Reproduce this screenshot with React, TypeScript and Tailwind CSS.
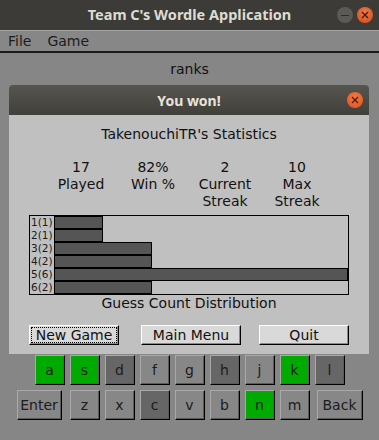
import React from 'react'

const green = 'bg-[#00aa00]'
const dark = 'bg-[#666666]'
const plain = 'bg-[#878787]'

const row1: [string, string][] = [
  ['a', green], ['s', green], ['d', dark], ['f', plain], ['g', plain],
  ['h', dark], ['j', plain], ['k', green], ['l', dark],
]
const row2: [string, string][] = [
  ['z', plain], ['x', plain], ['c', dark], ['v', plain], ['b', plain], ['n', green], ['m', plain],
]

const stats = [
  ['17', 'Played', ''],
  ['82%', 'Win %', ''],
  ['2', 'Current', 'Streak'],
  ['10', 'Max', 'Streak'],
]

const dist = [1, 1, 2, 2, 6, 2]

function Key({ label, bg, w = 'w-[30px]' }: { label: string; bg: string; w?: string }) {
  return (
    <div
      className={`${w} h-[30px] ${bg} flex items-center justify-center border border-t-[#a9a9a9] border-l-[#a9a9a9] border-r-black border-b-black shadow-[inset_-1px_-1px_0_#5a5a5a] text-[14px] text-[#1c1c1c]`}
    >
      {label}
    </div>
  )
}

function TkButton({ label, w, focus }: { label: string; w: string; focus?: boolean }) {
  return (
    <div
      className={`${w} h-[20px] bg-[#d9d9d9] border border-t-white border-l-white border-r-black border-b-black shadow-[inset_-1px_-1px_0_#8a8a8a] flex items-center justify-center p-[1px]`}
    >
      <div
        className={`w-full h-full flex items-center justify-center text-[14px] leading-none text-[#111] ${focus ? 'outline outline-1 outline-dotted outline-black -outline-offset-1' : ''}`}
      >
        {label}
      </div>
    </div>
  )
}

export default function App() {
  return (
    <div
      className="relative w-[379px] h-[440px] bg-[#868686] flex flex-col overflow-hidden"
      style={{ fontFamily: '"DejaVu Sans", sans-serif' }}
    >
      {/* window title bar */}
      <div className="h-[30px] bg-[#3c3b37] flex items-center justify-center relative">
        <span className="text-[14.5px] font-bold text-[#dfdbd2]" style={{ fontFamily: '"Noto Sans", sans-serif' }}>
          Team C's Wordle Application
        </span>
        <div className="absolute right-[6px] top-[7px] flex gap-[4px]">
          <div className="w-[16px] h-[16px] rounded-full bg-[#5b5a56] flex items-center justify-center">
            <div className="w-[8px] h-[1px] bg-[#2e2d2a]" />
          </div>
          <div className="w-[16px] h-[16px] rounded-full bg-[radial-gradient(circle_at_50%_35%,#f07a45,#d4481a)] flex items-center justify-center">
            <svg width="8" height="8" viewBox="0 0 8 8">
              <path d="M1 1L7 7M7 1L1 7" stroke="#3a1c0c" strokeWidth="1.3" />
            </svg>
          </div>
        </div>
      </div>

      {/* menu bar */}
      <div className="h-[23px] bg-[#878787] border-t border-t-[#a3a3a3] border-b-2 border-b-[#1a1a1a] flex items-center gap-[16px] px-[8px] text-[14px] text-[#1c1c1c]">
        <span>File</span>
        <span>Game</span>
      </div>

      {/* main content */}
      <div className="flex-1 flex flex-col items-center pt-[8px] pb-[20px]">
        <div className="text-[14px] leading-[17px] text-[#111]">ranks</div>
        <div className="flex-1" />
        <div className="flex flex-col items-center gap-[5px] w-full">
          <div className="flex gap-[5px]">
            {row1.map(([l, bg]) => (
              <Key key={l} label={l} bg={bg} />
            ))}
          </div>
          <div className="flex">
            <Key label="Enter" bg={plain} w="w-[45px]" />
            <div className="flex gap-[5px] ml-[8px] mr-[7px]">
              {row2.map(([l, bg]) => (
                <Key key={l} label={l} bg={bg} />
              ))}
            </div>
            <Key label="Back" bg={plain} w="w-[46px]" />
          </div>
        </div>
      </div>

      {/* dialog window */}
      <div className="absolute left-[9px] top-[85px] w-[360px]">
        <div className="h-[30px] rounded-t-[4px] bg-gradient-to-b from-[#57554f] to-[#403f3a] flex items-center justify-center relative">
          <span className="text-[14px] font-bold text-[#e8e4dc]" style={{ fontFamily: '"Noto Sans", sans-serif' }}>
            You won!
          </span>
          <div className="absolute right-[6px] top-[7px] w-[16px] h-[16px] rounded-full bg-[radial-gradient(circle_at_50%_35%,#f47a40,#e0501a)] flex items-center justify-center">
            <svg width="8" height="8" viewBox="0 0 8 8">
              <path d="M1 1L7 7M7 1L1 7" stroke="#4a1c08" strokeWidth="1.3" />
            </svg>
          </div>
        </div>
        <div className="bg-[#c0c0c0] flex flex-col items-center pt-[11px] pb-[9px] text-[14px] leading-[17px] text-[#111]">
          <div>TakenouchiTR's Statistics</div>
          <div className="grid grid-cols-4 w-[288px] mt-[16px]">
            {stats.map(([n, a, b]) => (
              <div key={a} className="flex flex-col items-center">
                <span>{n}</span>
                <span>{a}</span>
                <span className="h-[17px]">{b}</span>
              </div>
            ))}
          </div>
          <div className="mt-[5px] w-[320px] border border-black flex flex-col">
            {dist.map((c, i) => (
              <div key={i} className="flex h-[13px]">
                <div className="w-[24px] text-[10.5px] leading-[13px] pl-[1px] text-[#1a1a1a]">
                  {i + 1}({c})
                </div>
                <div className="h-[13px] bg-[#555555] border border-black" style={{ width: c * 49 }} />
              </div>
            ))}
          </div>
          <div className="leading-[16px]">Guess Count Distribution</div>
          <div className="w-[320px] flex mt-[14px]">
            <TkButton label="New Game" w="w-[90px]" focus />
            <div className="ml-[22px]">
              <TkButton label="Main Menu" w="w-[100px]" />
            </div>
            <div className="ml-[18px]">
              <TkButton label="Quit" w="w-[90px]" />
            </div>
          </div>
        </div>
      </div>
    </div>
  )
}
